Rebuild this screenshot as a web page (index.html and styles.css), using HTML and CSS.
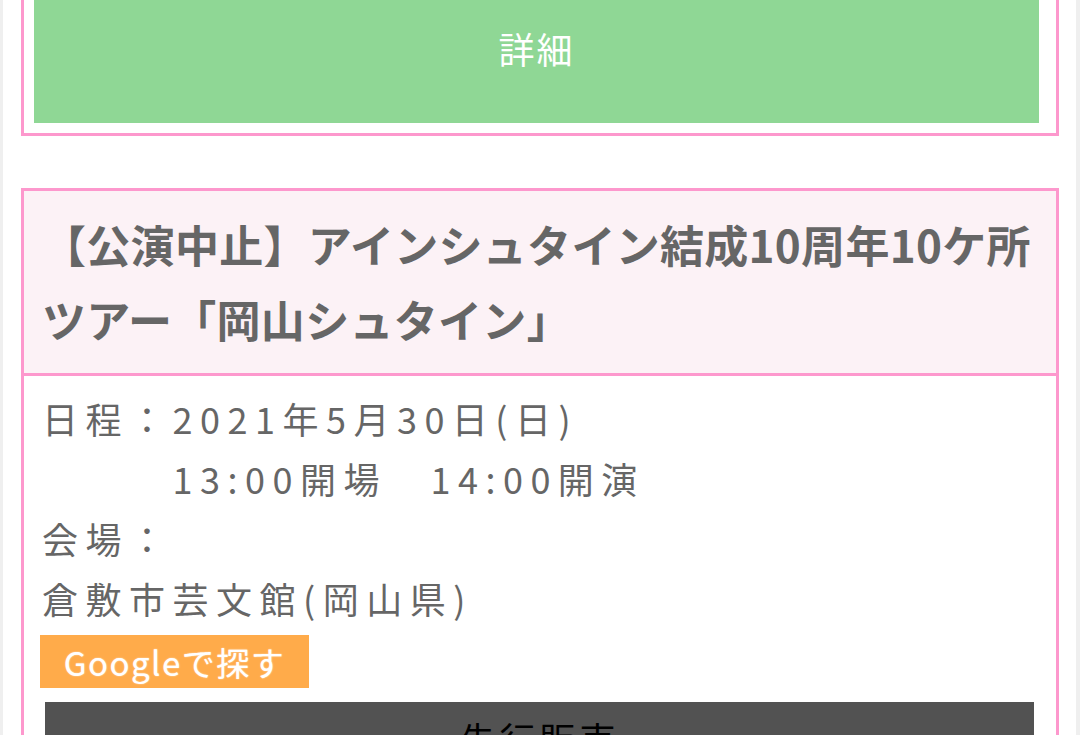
FILE: index.html
```html
<!DOCTYPE html>
<html lang="ja">
<head>
<meta charset="utf-8">
<title>公演情報</title>
<link rel="stylesheet" href="styles.css">
</head>
<body>
<div class="page">
  <div class="card card-top">
    <a class="btn-detail">詳細</a>
  </div>
  <div class="card event">
    <h2 class="event-title">【公演中止】アインシュタイン結成10周年10ケ所<br>ツアー「岡山シュタイン」</h2>
    <div class="event-body">
      <p class="info">日程：2021年5月30日(日)<br>　　　13:00開場　14:00開演<br>会場：<br>倉敷市芸文館(岡山県)</p>
      <a class="btn-google">Googleで探す</a>
      <div class="btn-sale">先行販売</div>
    </div>
  </div>
</div>
</body>
</html>
```

FILE: styles.css
```css
html, body {
  margin: 0;
  padding: 0;
  background: #efefef;
  overflow: hidden;
}
body {
  font-family: "Noto Sans CJK JP", "Noto Sans", sans-serif;
  color: #666;
}
.page {
  background: #fff;
  margin: 0 4px 0 3px;
  padding: 0 17px 0 18px;
  min-height: 900px;
}
.card {
  border: 3px solid #fd98cd;
  background: #fff;
}
.card-top {
  margin-top: -40px;
  padding: 10px 17px 10px 10px;
}
.btn-detail {
  display: flex;
  align-items: center;
  justify-content: center;
  height: 150px;
  background: #8fd795;
  color: #fff;
  font-size: 36px;
  letter-spacing: 2px;
}
.event {
  margin-top: 52px;
}
.event-title {
  margin: 0;
  padding: 16px 0 16px 18px;
  background: #fcf2f6;
  border-bottom: 3px solid #fd98cd;
  font-size: 44px;
  line-height: 75px;
  font-weight: 700;
  letter-spacing: 0.3px;
  color: #666;
  white-space: nowrap;
  overflow: hidden;
}
.event-body {
  padding: 12px 22px 0 18px;
}
.info {
  margin: 0;
  font-size: 36px;
  line-height: 60px;
  letter-spacing: 7.5px;
  color: #666;
}
.btn-google {
  display: flex;
  align-items: center;
  justify-content: center;
  width: 269px;
  height: 53px;
  margin: 7px 0 0 -2px;
  background: #ffab4a;
  color: #fff;
  font-size: 33px;
  font-weight: 400;
  letter-spacing: 1.5px;
  text-shadow: 0 0 1.5px rgba(255, 255, 255, 0.8);
}
.btn-sale {
  margin: 14px 0 0 3px;
  background: #525252;
  color: #000;
  font-size: 36px;
  line-height: 60px;
  padding: 6px 0;
  text-align: center;
  letter-spacing: 4px;
}
```
